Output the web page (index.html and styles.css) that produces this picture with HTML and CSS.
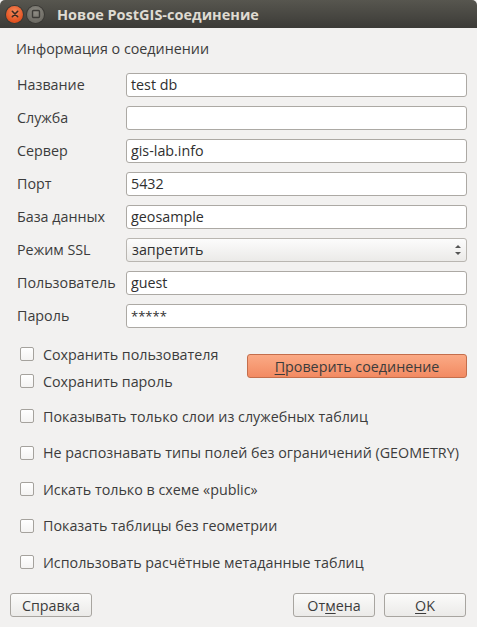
FILE: index.html
```html
<!DOCTYPE html>
<html lang="ru">
<head>
<meta charset="utf-8">
<link rel="stylesheet" href="styles.css">
</head>
<body>
<div class="window">
  <div class="titlebar">
    <span class="wbtn close"><svg width="16" height="16" viewBox="0 0 16 16"><path d="M5.3 5.3 L10.7 10.7 M10.7 5.3 L5.3 10.7" stroke="#3a2a22" stroke-width="1.6" stroke-linecap="round"/></svg></span>
    <span class="wbtn max"><svg width="16" height="16" viewBox="0 0 16 16"><rect x="4.5" y="4.5" width="7" height="7" rx="1" fill="none" stroke="#3c3b37" stroke-width="1.4"/></svg></span>
    <span class="title">Новое PostGIS-соединение</span>
  </div>
  <div class="content">
    <div class="section">Информация о соединении</div>
    <div class="form">
      <label class="lbl">Название</label><div class="field">test db</div>
      <label class="lbl">Служба</label><div class="field"></div>
      <label class="lbl">Сервер</label><div class="field">gis-lab.info</div>
      <label class="lbl">Порт</label><div class="field">5432</div>
      <label class="lbl">База данных</label><div class="field">geosample</div>
      <label class="lbl">Режим SSL</label><div class="field combo"><span>запретить</span><span class="spin"><svg width="8" height="14" viewBox="0 0 8 14"><path d="M1 5 L4 2 L7 5 Z" fill="#555"/><path d="M1 9 L4 12 L7 9 Z" fill="#555"/></svg></span></div>
      <label class="lbl">Пользователь</label><div class="field">guest</div>
      <label class="lbl">Пароль</label><div class="field pass">*****</div>
    </div>
    <div class="saverow">
      <div class="savechecks">
        <div class="check"><span class="box"></span>Сохранить пользователя</div>
        <div class="check"><span class="box"></span>Сохранить пароль</div>
      </div>
      <div class="btn test"><u>П</u>роверить соединение</div>
    </div>
    <div class="options">
      <div class="check"><span class="box"></span>Показывать только слои из служебных таблиц</div>
      <div class="check"><span class="box"></span>Не распознавать типы полей без ограничений (GEOMETRY)</div>
      <div class="check"><span class="box"></span>Искать только в схеме «public»</div>
      <div class="check"><span class="box"></span>Показать таблицы без геометрии</div>
      <div class="check"><span class="box"></span>Использовать расчётные метаданные таблиц</div>
    </div>
    <div class="buttons">
      <div class="btn help">Справка</div>
      <div class="spacer"></div>
      <div class="btn cancel">От<u>м</u>ена</div>
      <div class="btn ok"><u>O</u>K</div>
    </div>
  </div>
</div>
</body>
</html>
```
FILE: styles.css
```css
html, body {
  margin: 0;
  padding: 0;
  background: #f2f1f0;
}
body {
  font-family: "Open Sans", "Noto Sans", sans-serif;
  font-size: 14.3px;
  color: #3c3c3c;
}
.window {
  width: 477px;
  height: 627px;
  background: #f2f1f0;
  display: flex;
  flex-direction: column;
  overflow: hidden;
}
.titlebar {
  height: 28px;
  flex: none;
  display: flex;
  align-items: center;
  background: linear-gradient(#57564f, #3c3b37);
  border-radius: 5px 5px 0 0;
  padding-left: 6px;
  box-sizing: border-box;
}
.wbtn {
  width: 17px;
  height: 17px;
  border-radius: 50%;
  display: flex;
  align-items: center;
  justify-content: center;
  margin-right: 4px;
}
.wbtn svg { display: block; }
.close {
  background: radial-gradient(circle at 50% 35%, #f58a5c, #e2511f 70%);
  box-shadow: 0 0 0 1px #3a3935;
}
.max {
  background: radial-gradient(circle at 50% 35%, #8e8c84, #6e6c65 70%);
  box-shadow: 0 0 0 1px #3a3935;
}
.title {
  margin-left: 9px;
  color: #dfdbd2;
  font-weight: bold;
  font-size: 14.5px;
}
.content {
  flex: 1;
  display: flex;
  flex-direction: column;
  padding: 10px 10px 10px 10px;
}
.section {
  padding-left: 6px;
  height: 20px;
  line-height: 20px;
  margin-top: 1px;
  margin-bottom: 14px;
}
.form {
  display: grid;
  grid-template-columns: 109px 1fr;
  row-gap: 9px;
  padding-left: 7px;
  padding-right: 0;
}
.lbl {
  height: 24px;
  line-height: 24px;
}
.field {
  height: 24px;
  box-sizing: border-box;
  border: 1px solid #aca9a4;
  border-radius: 3px;
  background: #fff;
  padding: 0 4px;
  line-height: 22px;
  color: #2f2f2f;
}
.combo {
  display: flex;
  justify-content: space-between;
  align-items: center;
  background: linear-gradient(#fcfcfc, #ebeae8);
  border-color: #b9b6b1;
  padding-left: 5px;
  padding-right: 4px;
}
.spin svg { display: block; }
.pass { font-size: 13px; }
.saverow {
  display: flex;
  align-items: flex-start;
  margin-top: 16px;
}
.savechecks {
  flex: 1;
  display: flex;
  flex-direction: column;
  gap: 7px;
}
.check {
  display: flex;
  align-items: center;
  height: 20px;
  padding-left: 10px;
}
.box {
  width: 12px;
  height: 12px;
  border: 1px solid #a5a29d;
  border-radius: 2px;
  background: linear-gradient(#ffffff, #f4f3f2);
  margin-right: 9px;
  flex: none;
}
.btn {
  height: 24px;
  box-sizing: border-box;
  border: 1px solid #a8a5a0;
  border-radius: 3px;
  background: linear-gradient(#fbfbfa, #ebeae8);
  display: flex;
  align-items: center;
  justify-content: center;
  color: #3c3c3c;
}
.btn u { text-decoration-thickness: 1px; text-underline-offset: 2px; }
.test {
  width: 220px;
  margin-top: 10px;
  background: linear-gradient(#fbaa85, #f28a62);
  border-color: #c46e4c;
}
.options {
  display: flex;
  flex-direction: column;
  gap: 16.5px;
  margin-top: 15px;
}
.buttons {
  margin-top: auto;
  display: flex;
  align-items: center;
  gap: 9px;
}
.spacer { flex: 1; }
.help { width: 82px; }
.cancel { width: 82px; }
.ok { width: 82px; margin-right: 1px; }
```
